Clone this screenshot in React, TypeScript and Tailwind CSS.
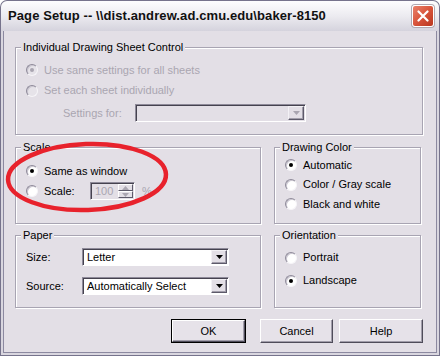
import React from 'react'

const face = 'bg-[#e3dfe6]'

const Radio = ({ checked = false, disabled = false }: { checked?: boolean; disabled?: boolean }) => (
  <span
    className={`w-[12px] h-[12px] shrink-0 rounded-full flex items-center justify-center border border-t-[#8e8a99] border-l-[#8e8a99] border-r-[#f6f5f8] border-b-[#f6f5f8] shadow-[inset_1px_1px_0_#cbc7d1] ${
      disabled ? 'bg-[#e6e3e9]' : 'bg-white'
    }`}
  >
    {checked && <span className={`w-[4px] h-[4px] rounded-full ${disabled ? 'bg-[#a9a5b0]' : 'bg-black'}`} />}
  </span>
)

const Arrow = ({ color = '#000', up = false }: { color?: string; up?: boolean }) => (
  <svg width="7" height="4" viewBox="0 0 7 4">
    <polygon points={up ? '0,4 7,4 3.5,0' : '0,0 7,0 3.5,4'} fill={color} />
  </svg>
)

const DropButton = ({ disabled = false }: { disabled?: boolean }) => (
  <span
    className={`w-[16px] h-full shrink-0 flex items-center justify-center ${face} border border-t-[#f3f1f5] border-l-[#f3f1f5] border-r-[#5d5a6a] border-b-[#5d5a6a] shadow-[inset_-1px_-1px_0_#a19daa]`}
  >
    <Arrow color={disabled ? '#a9a5b0' : '#000'} />
  </span>
)

const Combo = ({ value, width, disabled = false }: { value: string; width: string; disabled?: boolean }) => (
  <div
    className={`${width} h-[18px] flex items-stretch border border-t-[#8e8a99] border-l-[#8e8a99] border-r-white border-b-white shadow-[inset_1px_1px_0_#45424f] p-[1px] ${
      disabled ? face : 'bg-white'
    }`}
  >
    <span className="flex-1 pl-[3px] text-[11px] leading-[14px] text-black flex items-center">{value}</span>
    <DropButton disabled={disabled} />
  </div>
)

const Group = ({ title, className, children }: { title: string; className: string; children?: React.ReactNode }) => (
  <div
    className={`relative border border-[#a8a4b2] shadow-[inset_1px_1px_0_#fff,1px_1px_0_#fff] ${className}`}
  >
    <span className={`absolute -top-[7px] left-[5px] px-[2px] ${face} text-[11px] leading-[13px] text-black`}>{title}</span>
    {children}
  </div>
)

const RadioRow = ({
  label,
  checked,
  disabled,
  h,
}: {
  label: string
  checked?: boolean
  disabled?: boolean
  h: string
}) => (
  <div className={`${h} flex items-center gap-[6px]`}>
    <Radio checked={checked} disabled={disabled} />
    <span className={`text-[11px] leading-[13px] ${disabled ? 'text-[#aaa6b1]' : 'text-black'}`}>{label}</span>
  </div>
)

const Button = ({ label, width, isDefault = false }: { label: string; width: string; isDefault?: boolean }) => (
  <div className={`${width} h-[24px] ${isDefault ? 'border border-black' : ''}`}>
    <div
      className={`w-full h-full flex items-center justify-center text-[11px] text-black bg-[#e6e2e9] border border-t-white border-l-white border-r-[#4f4c5a] border-b-[#4f4c5a] shadow-[inset_-1px_-1px_0_#a19daa]`}
    >
      {label}
    </div>
  </div>
)

export default function App() {
  return (
    <div className="w-[440px] h-[356px] flex flex-col rounded-t-[7px] overflow-hidden bg-[#76738c] font-['Liberation_Sans',Arial,sans-serif] relative">
      {/* title bar */}
      <div className="h-[30px] shrink-0 mx-[1px] mt-[1px] rounded-t-[6px] flex items-center justify-between pl-[7px] pr-[5px] bg-linear-to-b from-[#fdfdfe] via-[#ecebf0] to-[#d5d3dd]">
        <span className="text-[13px] font-bold text-[#111] tracking-[0.1px]">
          Page Setup -- \\dist.andrew.ad.cmu.edu\baker-8150
        </span>
        <span className="w-[22px] h-[22px] rounded-[3px] border border-white bg-linear-to-br from-[#e9826b] via-[#d8533a] to-[#b9371f] flex items-center justify-center shadow-[0_0_0_1px_#b0a8b0]">
          <svg width="12" height="12" viewBox="0 0 12 12">
            <path d="M1.5 1.5 L10.5 10.5 M10.5 1.5 L1.5 10.5" stroke="#fff" strokeWidth="2.2" strokeLinecap="round" />
          </svg>
        </span>
      </div>

      {/* body frame */}
      <div className="flex-1 mx-[1px] mb-[1px] bg-[#d9d6df] px-[2px] pb-[2px] flex">
        <div className="flex-1 border-x border-b border-[#8c89a0] bg-[#e3dfe6] pl-[11px] pr-[13px] flex flex-col">
          <Group title="Individual Drawing Sheet Control" className="mt-[16px] h-[88px] pt-[12px] pl-[10px]">
            <RadioRow h="h-[20px]" label="Use same settings for all sheets" checked disabled />
            <RadioRow h="h-[21px]" label="Set each sheet individually" disabled />
            <div className="mt-[3px] h-[18px] flex items-center">
              <span className="ml-[37px] w-[72px] text-[11px] text-[#aaa6b1]">Settings for:</span>
              <Combo value="" width="w-[171px]" disabled />
            </div>
          </Group>

          <div className="mt-[12px] flex gap-[13px]">
            <Group title="Scale" className="w-[246px] h-[77px] pt-[13px] pl-[10px]">
              <RadioRow h="h-[20px]" label="Same as window" checked />
              <div className="h-[20px] flex items-center">
                <Radio />
                <span className="ml-[6px] w-[46px] text-[11px] text-black">Scale:</span>
                <div className="w-[45px] h-[18px] flex items-stretch border border-t-[#8e8a99] border-l-[#8e8a99] border-r-white border-b-white shadow-[inset_1px_1px_0_#45424f] p-[1px] bg-[#e3dfe6]">
                  <span className="flex-1 pl-[3px] text-[11px] text-[#aaa6b1] flex items-center">100</span>
                  <div className="w-[15px] flex flex-col">
                    <span className={`flex-1 flex items-center justify-center ${face} border border-t-white border-l-white border-r-[#5d5a6a] border-b-[#5d5a6a]`}>
                      <Arrow up color="#aaa6b1" />
                    </span>
                    <span className={`flex-1 flex items-center justify-center ${face} border border-t-white border-l-white border-r-[#5d5a6a] border-b-[#5d5a6a]`}>
                      <Arrow color="#aaa6b1" />
                    </span>
                  </div>
                </div>
                <span className="ml-[7px] text-[11px] text-[#aaa6b1]">%</span>
              </div>
            </Group>
            <Group title="Drawing Color" className="w-[147px] h-[77px] pt-[7px] pl-[10px]">
              <RadioRow h="h-[20px]" label="Automatic" checked />
              <RadioRow h="h-[19px]" label="Color / Gray scale" />
              <RadioRow h="h-[20px]" label="Black and white" />
            </Group>
          </div>

          <div className="mt-[11px] flex gap-[13px]">
            <Group title="Paper" className="w-[246px] h-[73px] pt-[12px] pl-[10px]">
              <div className="h-[18px] flex items-center">
                <span className="w-[56px] text-[11px] text-black">Size:</span>
                <Combo value="Letter" width="w-[147px]" />
              </div>
              <div className="mt-[11px] h-[18px] flex items-center">
                <span className="w-[56px] text-[11px] text-black">Source:</span>
                <Combo value="Automatically Select" width="w-[147px]" />
              </div>
            </Group>
            <Group title="Orientation" className="w-[147px] h-[73px] pt-[10px] pl-[10px]">
              <RadioRow h="h-[23px]" label="Portrait" />
              <RadioRow h="h-[23px]" label="Landscape" checked />
            </Group>
          </div>

          <div className="mt-[11px] flex justify-end">
            <Button label="OK" width="w-[75px]" isDefault />
            <div className="w-[14px]" />
            <Button label="Cancel" width="w-[73px]" />
            <div className="w-[6px]" />
            <Button label="Help" width="w-[84px]" />
          </div>
        </div>
      </div>

      {/* red annotation circle */}
      <svg className="absolute left-0 top-0 pointer-events-none" width="440" height="356" viewBox="0 0 440 356">
        <ellipse cx="87" cy="177" rx="79" ry="33" fill="none" stroke="#e8222c" strokeWidth="4.5" transform="rotate(-2 87 177)" />
      </svg>
    </div>
  )
}
